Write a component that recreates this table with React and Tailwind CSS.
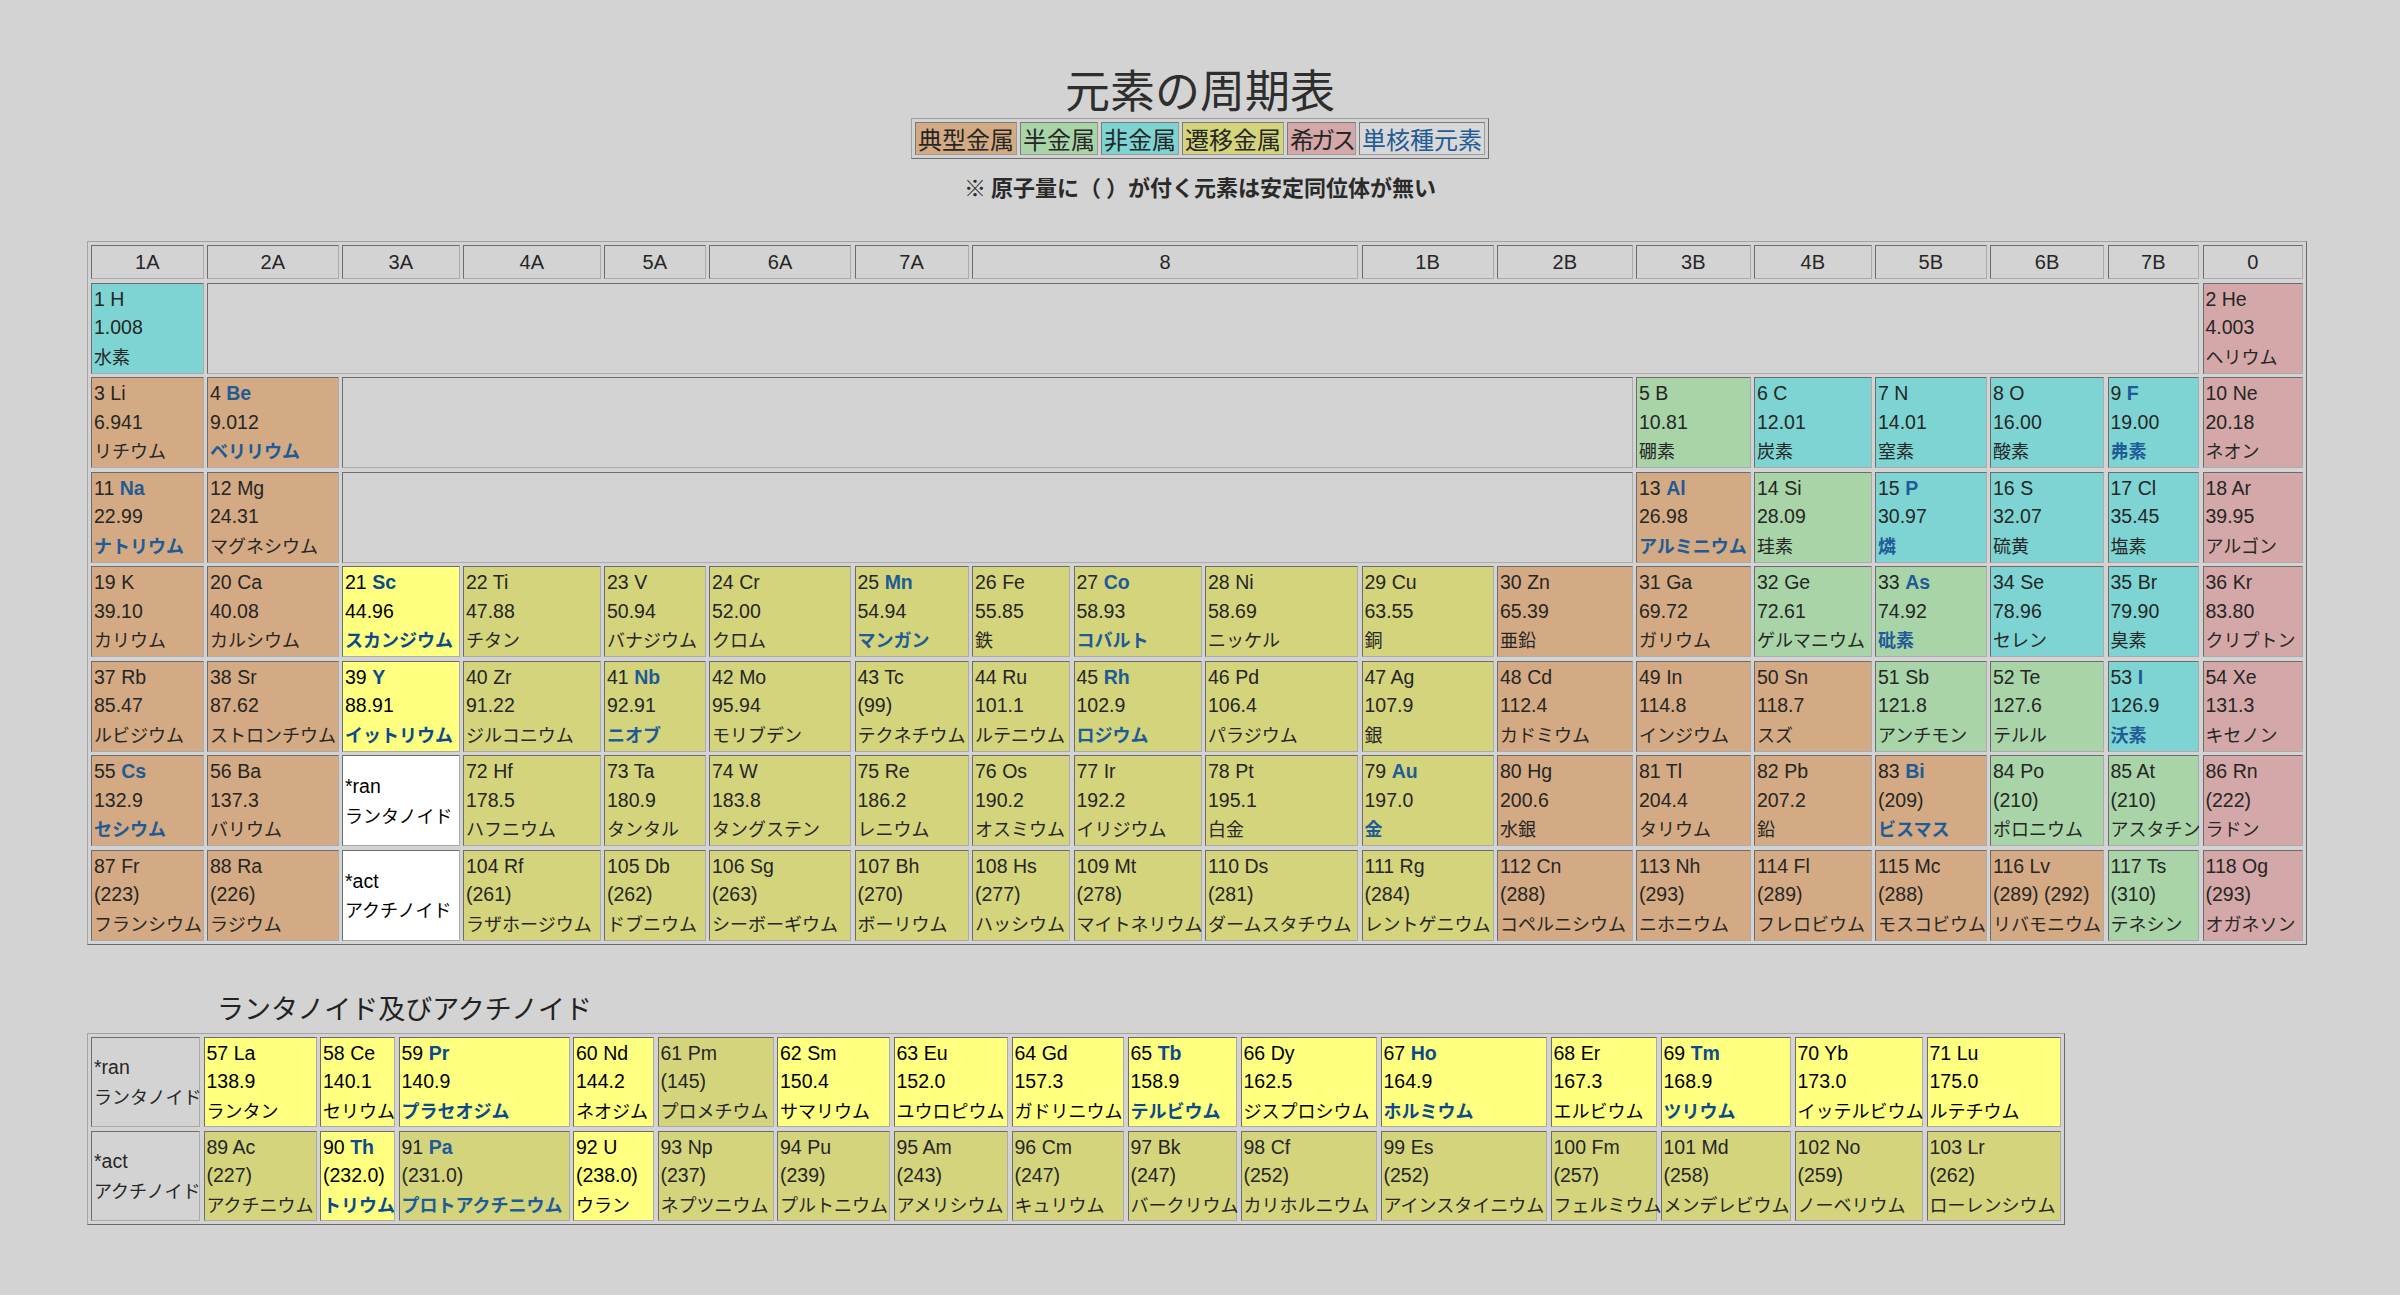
import React from 'react';

const BG = {
  tm: 'bg-[#d3aa83]',
  mt: 'bg-[#a8d4a8]',
  nm: 'bg-[#7dd4d2]',
  tr: 'bg-[#d4d47d]',
  ng: 'bg-[#d4a8a8]',
  re: 'bg-[#ffff80]',
};

const CELL =
  'border border-t-[#6c6c6c] border-l-[#6c6c6c] border-b-[#ababab] border-r-[#ababab]';

const LAT = "font-['Liberation_Sans','Noto_Sans_CJK_JP',sans-serif] text-[19.5px]";

const e = (n, s, w, name, c, b = false) => ({ n, s, w, name, c, b });

const HEAD = [
  ['1A', 1], ['2A', 1], ['3A', 1], ['4A', 1], ['5A', 1], ['6A', 1], ['7A', 1], ['8', 3],
  ['1B', 1], ['2B', 1], ['3B', 1], ['4B', 1], ['5B', 1], ['6B', 1], ['7B', 1], ['0', 1],
];

const ROWS = [
  [
    e(1, 'H', '1.008', '水素', 'nm'),
    { empty: 16 },
    e(2, 'He', '4.003', 'ヘリウム', 'ng'),
  ],
  [
    e(3, 'Li', '6.941', 'リチウム', 'tm'),
    e(4, 'Be', '9.012', 'ベリリウム', 'tm', true),
    { empty: 10 },
    e(5, 'B', '10.81', '硼素', 'mt'),
    e(6, 'C', '12.01', '炭素', 'nm'),
    e(7, 'N', '14.01', '窒素', 'nm'),
    e(8, 'O', '16.00', '酸素', 'nm'),
    e(9, 'F', '19.00', '弗素', 'nm', true),
    e(10, 'Ne', '20.18', 'ネオン', 'ng'),
  ],
  [
    e(11, 'Na', '22.99', 'ナトリウム', 'tm', true),
    e(12, 'Mg', '24.31', 'マグネシウム', 'tm'),
    { empty: 10 },
    e(13, 'Al', '26.98', 'アルミニウム', 'tm', true),
    e(14, 'Si', '28.09', '珪素', 'mt'),
    e(15, 'P', '30.97', '燐', 'nm', true),
    e(16, 'S', '32.07', '硫黄', 'nm'),
    e(17, 'Cl', '35.45', '塩素', 'nm'),
    e(18, 'Ar', '39.95', 'アルゴン', 'ng'),
  ],
  [
    e(19, 'K', '39.10', 'カリウム', 'tm'),
    e(20, 'Ca', '40.08', 'カルシウム', 'tm'),
    e(21, 'Sc', '44.96', 'スカンジウム', 're', true),
    e(22, 'Ti', '47.88', 'チタン', 'tr'),
    e(23, 'V', '50.94', 'バナジウム', 'tr'),
    e(24, 'Cr', '52.00', 'クロム', 'tr'),
    e(25, 'Mn', '54.94', 'マンガン', 'tr', true),
    e(26, 'Fe', '55.85', '鉄', 'tr'),
    e(27, 'Co', '58.93', 'コバルト', 'tr', true),
    e(28, 'Ni', '58.69', 'ニッケル', 'tr'),
    e(29, 'Cu', '63.55', '銅', 'tr'),
    e(30, 'Zn', '65.39', '亜鉛', 'tm'),
    e(31, 'Ga', '69.72', 'ガリウム', 'tm'),
    e(32, 'Ge', '72.61', 'ゲルマニウム', 'mt'),
    e(33, 'As', '74.92', '砒素', 'mt', true),
    e(34, 'Se', '78.96', 'セレン', 'nm'),
    e(35, 'Br', '79.90', '臭素', 'nm'),
    e(36, 'Kr', '83.80', 'クリプトン', 'ng'),
  ],
  [
    e(37, 'Rb', '85.47', 'ルビジウム', 'tm'),
    e(38, 'Sr', '87.62', 'ストロンチウム', 'tm'),
    e(39, 'Y', '88.91', 'イットリウム', 're', true),
    e(40, 'Zr', '91.22', 'ジルコニウム', 'tr'),
    e(41, 'Nb', '92.91', 'ニオブ', 'tr', true),
    e(42, 'Mo', '95.94', 'モリブデン', 'tr'),
    e(43, 'Tc', '(99)', 'テクネチウム', 'tr'),
    e(44, 'Ru', '101.1', 'ルテニウム', 'tr'),
    e(45, 'Rh', '102.9', 'ロジウム', 'tr', true),
    e(46, 'Pd', '106.4', 'パラジウム', 'tr'),
    e(47, 'Ag', '107.9', '銀', 'tr'),
    e(48, 'Cd', '112.4', 'カドミウム', 'tm'),
    e(49, 'In', '114.8', 'インジウム', 'tm'),
    e(50, 'Sn', '118.7', 'スズ', 'tm'),
    e(51, 'Sb', '121.8', 'アンチモン', 'mt'),
    e(52, 'Te', '127.6', 'テルル', 'mt'),
    e(53, 'I', '126.9', '沃素', 'nm', true),
    e(54, 'Xe', '131.3', 'キセノン', 'ng'),
  ],
  [
    e(55, 'Cs', '132.9', 'セシウム', 'tm', true),
    e(56, 'Ba', '137.3', 'バリウム', 'tm'),
    { label: ['*ran', 'ランタノイド'] },
    e(72, 'Hf', '178.5', 'ハフニウム', 'tr'),
    e(73, 'Ta', '180.9', 'タンタル', 'tr'),
    e(74, 'W', '183.8', 'タングステン', 'tr'),
    e(75, 'Re', '186.2', 'レニウム', 'tr'),
    e(76, 'Os', '190.2', 'オスミウム', 'tr'),
    e(77, 'Ir', '192.2', 'イリジウム', 'tr'),
    e(78, 'Pt', '195.1', '白金', 'tr'),
    e(79, 'Au', '197.0', '金', 'tr', true),
    e(80, 'Hg', '200.6', '水銀', 'tm'),
    e(81, 'Tl', '204.4', 'タリウム', 'tm'),
    e(82, 'Pb', '207.2', '鉛', 'tm'),
    e(83, 'Bi', '(209)', 'ビスマス', 'tm', true),
    e(84, 'Po', '(210)', 'ポロニウム', 'mt'),
    e(85, 'At', '(210)', 'アスタチン', 'mt'),
    e(86, 'Rn', '(222)', 'ラドン', 'ng'),
  ],
  [
    e(87, 'Fr', '(223)', 'フランシウム', 'tm'),
    e(88, 'Ra', '(226)', 'ラジウム', 'tm'),
    { label: ['*act', 'アクチノイド'] },
    e(104, 'Rf', '(261)', 'ラザホージウム', 'tr'),
    e(105, 'Db', '(262)', 'ドブニウム', 'tr'),
    e(106, 'Sg', '(263)', 'シーボーギウム', 'tr'),
    e(107, 'Bh', '(270)', 'ボーリウム', 'tr'),
    e(108, 'Hs', '(277)', 'ハッシウム', 'tr'),
    e(109, 'Mt', '(278)', 'マイトネリウム', 'tr'),
    e(110, 'Ds', '(281)', 'ダームスタチウム', 'tr'),
    e(111, 'Rg', '(284)', 'レントゲニウム', 'tr'),
    e(112, 'Cn', '(288)', 'コペルニシウム', 'tm'),
    e(113, 'Nh', '(293)', 'ニホニウム', 'tm'),
    e(114, 'Fl', '(289)', 'フレロビウム', 'tm'),
    e(115, 'Mc', '(288)', 'モスコビウム', 'tm'),
    e(116, 'Lv', '(289) (292)', 'リバモニウム', 'tm'),
    e(117, 'Ts', '(310)', 'テネシン', 'mt'),
    e(118, 'Og', '(293)', 'オガネソン', 'ng'),
  ],
];

const LAN = [
  e(57, 'La', '138.9', 'ランタン', 're'),
  e(58, 'Ce', '140.1', 'セリウム', 're'),
  e(59, 'Pr', '140.9', 'プラセオジム', 're', true),
  e(60, 'Nd', '144.2', 'ネオジム', 're'),
  e(61, 'Pm', '(145)', 'プロメチウム', 'tr'),
  e(62, 'Sm', '150.4', 'サマリウム', 're'),
  e(63, 'Eu', '152.0', 'ユウロピウム', 're'),
  e(64, 'Gd', '157.3', 'ガドリニウム', 're'),
  e(65, 'Tb', '158.9', 'テルビウム', 're', true),
  e(66, 'Dy', '162.5', 'ジスプロシウム', 're'),
  e(67, 'Ho', '164.9', 'ホルミウム', 're', true),
  e(68, 'Er', '167.3', 'エルビウム', 're'),
  e(69, 'Tm', '168.9', 'ツリウム', 're', true),
  e(70, 'Yb', '173.0', 'イッテルビウム', 're'),
  e(71, 'Lu', '175.0', 'ルテチウム', 're'),
];

const ACT = [
  e(89, 'Ac', '(227)', 'アクチニウム', 'tr'),
  e(90, 'Th', '(232.0)', 'トリウム', 're', true),
  e(91, 'Pa', '(231.0)', 'プロトアクチニウム', 'tr', true),
  e(92, 'U', '(238.0)', 'ウラン', 're'),
  e(93, 'Np', '(237)', 'ネプツニウム', 'tr'),
  e(94, 'Pu', '(239)', 'プルトニウム', 'tr'),
  e(95, 'Am', '(243)', 'アメリシウム', 'tr'),
  e(96, 'Cm', '(247)', 'キュリウム', 'tr'),
  e(97, 'Bk', '(247)', 'バークリウム', 'tr'),
  e(98, 'Cf', '(252)', 'カリホルニウム', 'tr'),
  e(99, 'Es', '(252)', 'アインスタイニウム', 'tr'),
  e(100, 'Fm', '(257)', 'フェルミウム', 'tr'),
  e(101, 'Md', '(258)', 'メンデレビウム', 'tr'),
  e(102, 'No', '(259)', 'ノーベリウム', 'tr'),
  e(103, 'Lr', '(262)', 'ローレンシウム', 'tr'),
];

function El({ d }) {
  const yellow = d.c === 're';
  const blue = d.b ? (yellow ? 'text-[#0b4a8c] font-bold' : 'text-[#1f5b96] font-bold') : '';
  return (
    <div
      className={`${BG[d.c]} ${CELL} ${yellow ? 'text-black' : 'text-[#262626]'} pl-[2px] pt-[1px] text-[18px] leading-[28.5px] whitespace-nowrap overflow-visible`}
    >
      <div className={LAT}>
        {d.n} <span className={blue}>{d.s}</span>
      </div>
      <div className={LAT}>{d.w}</div>
      <div className={blue}>{d.name}</div>
    </div>
  );
}

function Label({ lines, white }) {
  return (
    <div
      className={`${white ? 'bg-white text-black' : 'bg-[#d3d3d3] text-[#262626]'} ${CELL} pl-[2px] flex flex-col justify-center text-[18px] leading-[28.5px] whitespace-nowrap`}
    >
      <div className={LAT}>{lines[0]}</div>
      <div>{lines[1]}</div>
    </div>
  );
}

function Empty({ span }) {
  return (
    <div
      className={`${CELL} bg-[#d3d3d3] ${span === 16 ? 'col-span-16' : 'col-span-10'}`}
    />
  );
}

const LEG = 'border border-t-[#7a7a7a] border-l-[#7a7a7a] border-b-[#9a9a9a] border-r-[#9a9a9a] px-[2px] text-[24px] leading-[31px]';

export default function App() {
  return (
    <div className="min-h-[1295px] w-full bg-[#d3d3d3] font-['Noto_Sans_CJK_JP','Noto_Sans',sans-serif] text-[#262626]">
      <div className="flex flex-col items-center pt-[61px]">
        <h1 className="text-[45px] leading-[56px] text-[#2e2e2e]">元素の周期表</h1>
        <div className="mt-[1px] flex gap-[3px] border border-t-[#a0a0a0] border-l-[#a0a0a0] border-b-[#6e6e6e] border-r-[#6e6e6e] p-[3px]">
          <span className={`${LEG} bg-[#d3aa83]`}>典型金属</span>
          <span className={`${LEG} bg-[#a8d4a8]`}>半金属</span>
          <span className={`${LEG} bg-[#7dd4d2]`}>非金属</span>
          <span className={`${LEG} bg-[#d4d47d]`}>遷移金属</span>
          <span className={`${LEG} bg-[#d4a8a8] tracking-[-3px]`}>希ガス</span>
          <span className={`${LEG} bg-[#d8d8d8] text-[#1f5b96]`}>単核種元素</span>
        </div>
        <p className="mt-[13px] text-[22px] leading-[28px] font-bold text-[#2a2a2a]">
          ※ 原子量に（ ）が付く元素は安定同位体が無い
        </p>
      </div>

      <div className="ml-[87px] mt-[41px] w-fit border border-t-[#a4a4a4] border-l-[#a4a4a4] border-b-[#6a6a6a] border-r-[#6a6a6a] p-[3px]">
        <div className="grid grid-cols-[112.5px_131.5px_117.5px_137.5px_101.5px_142px_114px_98px_128px_153px_132px_135.5px_114.5px_117.5px_111.5px_114px_91.5px_100.5px] grid-rows-[34px_repeat(7,91px)] gap-[3.5px]">
          {HEAD.map(([t, span]) => (
            <div
              key={t}
              className={`${CELL} ${span === 3 ? 'col-span-3' : ''} flex items-center justify-center font-['Liberation_Sans',sans-serif] text-[20px] text-[#262626]`}
            >
              {t}
            </div>
          ))}
          {ROWS.map((row, ri) =>
            row.map((d, ci) => {
              const k = `${ri}-${ci}`;
              if (d.empty) return <Empty key={k} span={d.empty} />;
              if (d.label) return <Label key={k} lines={d.label} white />;
              return <El key={k} d={d} />;
            })
          )}
        </div>
      </div>

      <h2 className="ml-[217px] mt-[45px] text-[27px] leading-[36px] text-[#222]">ランタノイド及びアクチノイド</h2>

      <div className="ml-[87px] mt-[7px] w-fit border border-t-[#a4a4a4] border-l-[#a4a4a4] border-b-[#6a6a6a] border-r-[#6a6a6a] p-[3px]">
        <div className="grid grid-cols-[109px_113px_75px_171px_81px_116px_113px_114.5px_112.5px_109.5px_136.5px_166.5px_106.5px_130.5px_128.5px_134.5px] grid-rows-[90.5px_90.5px] gap-[3.5px]">
          <Label lines={['*ran', 'ランタノイド']} />
          {LAN.map((d) => (
            <El key={d.n} d={d} />
          ))}
          <Label lines={['*act', 'アクチノイド']} />
          {ACT.map((d) => (
            <El key={d.n} d={d} />
          ))}
        </div>
      </div>
    </div>
  );
}
